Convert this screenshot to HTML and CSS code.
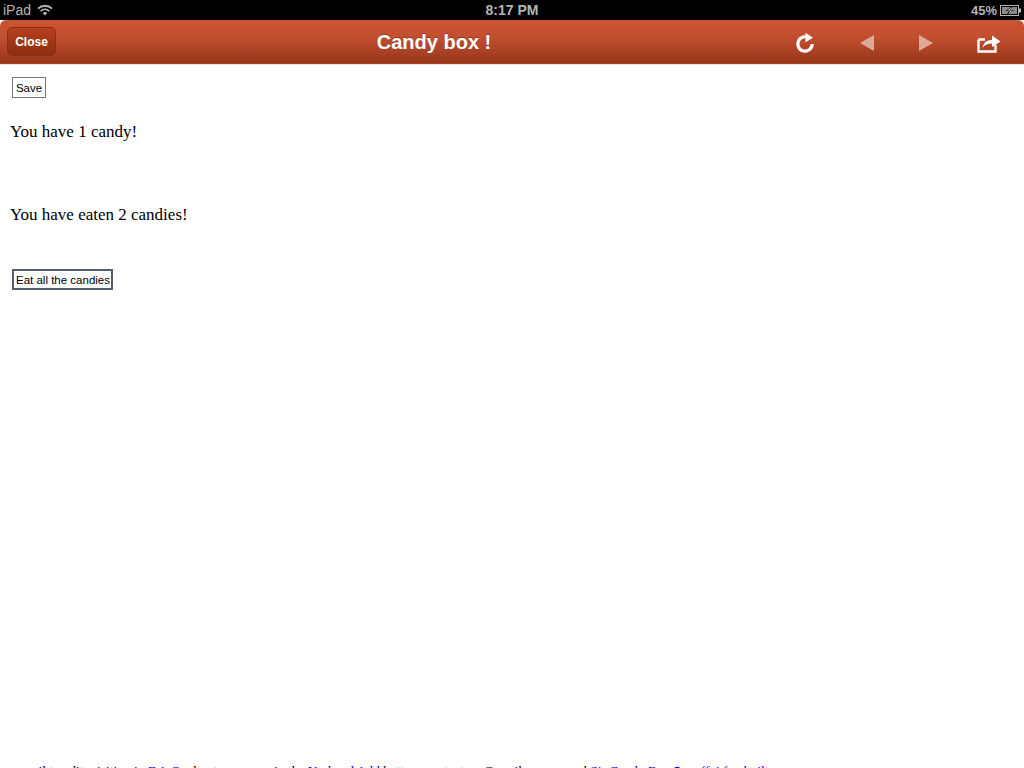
FILE: index.html
```html
<!DOCTYPE html>
<html lang="en">
<head>
    <meta charset="UTF-8">
    <title>Candy box !</title>
    <link rel="stylesheet" href="styles.css">
</head>
<body>

<div class="status-bar">
    <div class="status-left">
        <span>iPad</span>
        <svg class="wifi" width="16" height="12" viewBox="0 0 16 12">
            <path d="M1 4.6C5 .8 11 .8 15 4.6" fill="none" stroke="#b4b4b4" stroke-width="1.8"/>
            <path d="M3.6 7.1C6.2 4.8 9.8 4.8 12.4 7.1" fill="none" stroke="#b4b4b4" stroke-width="1.8"/>
            <path d="M5.6 9L8 11.5 10.4 9C9 7.8 7 7.8 5.6 9Z" fill="#b4b4b4"/>
        </svg>
    </div>
    <div class="status-time">8:17 PM</div>
    <div class="status-right">
        <span>45%</span>
        <svg class="battery" width="21" height="11" viewBox="0 0 21 11">
            <rect x=".5" y=".5" width="18" height="10" fill="none" stroke="#b4b4b4"/>
            <rect x="2" y="2" width="15" height="7" fill="#8a8a8a"/>
            <rect x="19" y="3.5" width="2" height="4" fill="#b4b4b4"/>
            <path d="M12.5 1L5.5 6H9L6.5 10 14 5H10.5Z" fill="#000"/>
            <path d="M11.4 2.4L7.2 5.4H10.4L8.4 8.4 12.6 5.4H9.6Z" fill="#eee"/>
        </svg>
    </div>
</div>

<header class="toolbar">
    <div class="toolbar-left">
        <a class="close-btn">Close</a>
    </div>
    <h1>Candy box !</h1>
    <div class="toolbar-right">
        <svg width="22" height="22" viewBox="0 0 22 22">
            <path d="M15.3 6.2A7.2 7.2 0 1 0 18.2 12" fill="none" stroke="#fff" stroke-width="3.2"/>
            <path d="M11.5 .8L19 5.8 11.5 10.2Z" fill="#fff"/>
        </svg>
        <svg width="16" height="18" viewBox="0 0 16 18">
            <path d="M15 1V17L1 9Z" fill="#e0a898"/>
        </svg>
        <svg width="16" height="18" viewBox="0 0 16 18">
            <path d="M1 1V17L15 9Z" fill="#e0a898"/>
        </svg>
        <svg width="24" height="20" viewBox="0 0 24 20">
            <path d="M1.5 6.5H8M18.5 12V18.5H1.5V6.5" fill="none" stroke="#fff" stroke-width="2.4"/>
            <path d="M5.5 15C6.5 9.5 10 7 15 7V2.5L23.5 8.5 15 14V10.5C11 10.5 8 11.5 5.5 15Z" fill="#fff"/>
        </svg>
    </div>
</header>

<div class="content">
    <button class="game-btn save-btn">Save</button>
    <p class="candy-count">You have 1 candy!</p>
    <p class="eaten-count">You have eaten 2 candies!</p>
    <button class="game-btn eat-btn">Eat all the candies</button>
</div>

<footer class="page-footer">
    <span>mail to edit, visiting in</span> <a>F.A.Q.</a> <span>about my game in the</span> <a>Nod and Add</a> <span>button, contact us @ mail a game and</span> <a>Sir Candy Box 5 on ff 4 fan built</a>
</footer>

</body>
</html>
```

FILE: styles.css
```css
html, body {
    height: 768px;
    overflow: hidden;
}
body {
    margin: 0;
    background-color: white;
    display: flex;
    flex-direction: column;
    font-family: "Liberation Serif", serif;
}
.status-bar {
    height: 20px;
    flex: none;
    background-color: #000;
    color: #b4b4b4;
    display: grid;
    grid-template-columns: 1fr auto 1fr;
    align-items: center;
    padding: 0 3px;
    font-family: "Liberation Sans", Arial, sans-serif;
    font-size: 14px;
}
.status-left {
    display: flex;
    align-items: center;
    gap: 6px;
}
.status-time {
    font-weight: bold;
}
.status-right {
    display: flex;
    align-items: center;
    justify-content: flex-end;
    gap: 3px;
    font-size: 13px;
    font-weight: bold;
}
.toolbar {
    height: 43px;
    flex: none;
    display: grid;
    grid-template-columns: 114px 1fr 270px;
    align-items: center;
    padding: 0 7px;
    background: linear-gradient(#cc5433, #c14f2f 40%, #98361a);
    border-bottom: 1px solid #a8401f;
    border-radius: 6px 6px 0 0;
    box-shadow: 0 1px 1px #e4e4e4;
    font-family: "Liberation Sans", Arial, sans-serif;
}
.toolbar h1 {
    margin: 2px 0 0;
    color: white;
    font-size: 20px;
    text-align: center;
    white-space: nowrap;
    text-shadow: 0 -1px 0 rgba(0, 0, 0, 0.3);
}
.close-btn {
    display: inline-block;
    width: 47px;
    height: 27px;
    line-height: 28px;
    text-align: center;
    color: white;
    font-size: 12px;
    font-weight: bold;
    border: 1px solid #8e2e14;
    border-radius: 5px;
    background: linear-gradient(#b6401f, #8e2c10);
}
.toolbar-right {
    display: flex;
    align-items: center;
    justify-content: flex-end;
    gap: 43px;
    padding: 2px 16px 0 0;
}
.content {
    flex: 1;
    padding: 13px 10px 0;
}
.game-btn {
    display: block;
    margin: 0 2px;
    padding: 0 2px;
    background-color: white;
    color: #000;
    font-family: "Liberation Sans", Arial, sans-serif;
    font-size: 11.5px;
    border-radius: 0;
}
.save-btn {
    height: 21px;
    width: 34px;
    border: 1px solid #777;
}
.eat-btn {
    height: 21px;
    width: 101px;
    border: 2px solid #555c6e;
    white-space: nowrap;
}
.candy-count {
    margin: 24px 0 0;
    font-size: 17px;
}
.eaten-count {
    margin: 63px 0 44px;
    font-size: 17px;
}
.page-footer {
    flex: none;
    margin-bottom: -10px;
    font-size: 13.5px;
    line-height: 14px;
    white-space: nowrap;
    padding-left: 22px;
}
.page-footer a {
    color: #0000ee;
}
```
